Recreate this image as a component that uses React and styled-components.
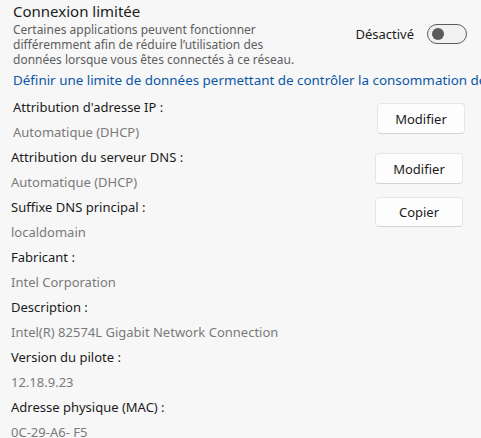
import React from 'react';
import styled, { createGlobalStyle } from 'styled-components';

const Global = createGlobalStyle`
  html, body {
    margin: 0;
    padding: 0;
    background: #f7f7f7;
  }
  body {
    font-family: "Segoe UI", "Noto Sans", "Open Sans", sans-serif;
    color: #1b1b1b;
    overflow: hidden;
  }
`;

const Page = styled.div`
  width: 481px;
  height: 438px;
  overflow: hidden;
  padding: 1px 0 0 13px;
  box-sizing: border-box;
`;

const Top = styled.div`
  display: flex;
  align-items: flex-start;
  justify-content: space-between;
  padding-right: 14px;
`;

const TopText = styled.div`
  display: flex;
  flex-direction: column;
`;

const Title = styled.div`
  font-size: 15px;
  line-height: 21px;
`;

const Desc = styled.div`
  width: 290px;
  font-size: 12px;
  line-height: 15px;
  color: #5e5e5e;
`;

const ToggleWrap = styled.div`
  display: flex;
  align-items: center;
  gap: 13px;
  margin-top: 23px;
  font-size: 13px;
`;

const Toggle = styled.div`
  width: 40px;
  height: 20px;
  box-sizing: border-box;
  border: 1px solid #5b5b5b;
  border-radius: 10px;
  background: #f1f1f1;
  display: flex;
  align-items: center;
  padding: 0 4px;
`;

const Knob = styled.span`
  width: 12px;
  height: 12px;
  border-radius: 50%;
  background: #5b5b5b;
`;

const Link = styled.div`
  margin-top: 3px;
  font-size: 13.4px;
  line-height: 20px;
  color: #0b56a6;
  white-space: nowrap;
`;

const List = styled.div`
  margin-top: 4.5px;
`;

const Group = styled.div`
  display: flex;
  align-items: flex-start;
  justify-content: space-between;
  padding-right: ${p => p.$right}px;
  margin-left: ${p => p.$shift}px;
`;

const Pair = styled.div`
  display: flex;
  flex-direction: column;
`;

const Label = styled.div`
  font-size: 13px;
  line-height: 25px;
  color: #1b1b1b;
`;

const Value = styled.div`
  font-size: 13px;
  line-height: 25px;
  color: #7a7a7a;
`;

const Button = styled.button`
  width: 88px;
  height: ${p => p.$h}px;
  margin-top: ${p => p.$dy}px;
  background: #fdfdfd;
  border: 1px solid #e6e6e6;
  border-bottom-color: #d4d4d4;
  border-radius: 4px;
  font-family: inherit;
  font-size: 13px;
  color: #1b1b1b;
  padding: 0;
`;

const groups = [
  { label: "Attribution d'adresse IP :", value: 'Automatique (DHCP)', button: 'Modifier', right: 16, shift: 0, h: 31, dy: 8.5 },
  { label: 'Attribution du serveur DNS :', value: 'Automatique (DHCP)', button: 'Modifier', right: 18, h: 31, dy: 8.5 },
  { label: 'Suffixe DNS principal :', value: 'localdomain', button: 'Copier', right: 18, h: 30, dy: 2.5 },
  { label: 'Fabricant :', value: 'Intel Corporation' },
  { label: 'Description :', value: 'Intel(R) 82574L Gigabit Network Connection' },
  { label: 'Version du pilote :', value: '12.18.9.23' },
  { label: 'Adresse physique (MAC) :', value: '0C-29-A6- F5' },
];

export default function App() {
  return (
    <Page>
      <Global />
      <Top>
        <TopText>
          <Title>Connexion limitée</Title>
          <Desc>
            Certaines applications peuvent fonctionner différemment afin de réduire l’utilisation des
            données lorsque vous êtes connectés à ce réseau.
          </Desc>
        </TopText>
        <ToggleWrap>
          Désactivé
          <Toggle><Knob /></Toggle>
        </ToggleWrap>
      </Top>
      <Link>Définir une limite de données permettant de contrôler la consommation de données sur ce réseau</Link>
      <List>
        {groups.map(g => (
          <Group key={g.label} $right={g.right || 0} $shift={g.shift ?? -2}>
            <Pair>
              <Label>{g.label}</Label>
              <Value>{g.value}</Value>
            </Pair>
            {g.button && <Button $h={g.h} $dy={g.dy}>{g.button}</Button>}
          </Group>
        ))}
      </List>
    </Page>
  );
}
